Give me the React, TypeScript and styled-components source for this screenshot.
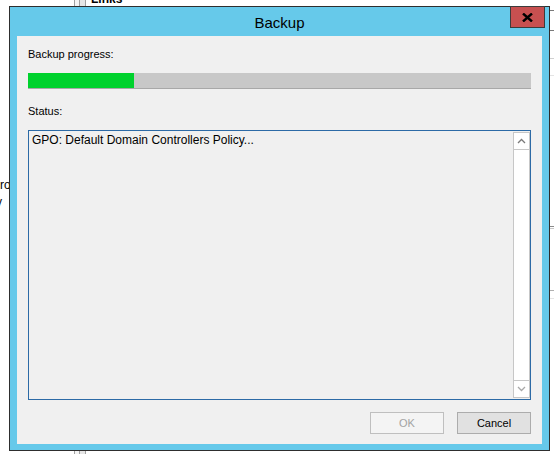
import React from "react";
import styled, { createGlobalStyle } from "styled-components";

const Global = createGlobalStyle`
  html, body { margin: 0; padding: 0; background: #ffffff; }
  body { width: 554px; height: 454px; overflow: hidden; font-family: "Liberation Sans", Arial, sans-serif; }
`;

const Desktop = styled.div`
  position: relative;
  width: 554px;
  height: 454px;
  background: #ffffff;
  overflow: hidden;
`;

const BgText = styled.div<{ $x: number; $y: number; $bold?: boolean }>`
  position: absolute;
  left: ${(p) => p.$x}px;
  top: ${(p) => p.$y}px;
  font-family: "Liberation Sans", Arial, sans-serif;
  font-size: 12px;
  font-weight: ${(p) => (p.$bold ? 700 : 400)};
  color: #000;
  line-height: 14px;
  white-space: nowrap;
`;

const BgSplitter = styled.div<{ $y: number; $h: number }>`
  position: absolute;
  left: 74px;
  top: ${(p) => p.$y}px;
  width: 12px;
  height: ${(p) => p.$h}px;
  box-sizing: border-box;
  border-left: 1px solid #a0a0a0;
  border-right: 1px solid #a0a0a0;
  background: linear-gradient(to right, #f4f4f4 0 4px, #a0a0a0 4px 5px, #e6e6e6 5px 100%);
`;

const BgLine = styled.div<{ $y: number; $c?: string }>`
  position: absolute;
  left: 550px;
  right: 0;
  top: ${(p) => p.$y}px;
  height: 1px;
  background: ${(p) => p.$c || "#7a7a7a"};
`;

const Window = styled.div`
  position: absolute;
  left: 9px;
  top: 6px;
  width: 541px;
  height: 445px;
  box-sizing: border-box;
  border: 1px solid #2e2e2e;
  background: #66c9ea;
  display: flex;
  flex-direction: column;
  padding: 0 7px 6px 7px;
`;

const TitleBar = styled.div`
  height: 29px;
  display: flex;
  align-items: center;
  justify-content: center;
  font-family: "Liberation Sans", Arial, sans-serif;
  font-size: 15px;
  color: #000;
  padding-top: 1px;
  box-sizing: border-box;
`;

const CloseButton = styled.div`
  position: absolute;
  top: -1px;
  right: 4px;
  width: 35px;
  height: 22px;
  box-sizing: border-box;
  border: 1px solid #3c3c3c;
  background: #c75050;
  display: flex;
  align-items: center;
  justify-content: center;
`;

const Client = styled.div`
  flex: 1;
  background: #f0f0f0;
  display: flex;
  flex-direction: column;
  padding: 12px 11px 9px 11px;
  font-family: "Liberation Sans", Arial, sans-serif;
  font-size: 11px;
  color: #000;
`;

const Label = styled.div<{ $gapTop?: number }>`
  line-height: 13px;
  height: 13px;
  margin-top: ${(p) => p.$gapTop || 0}px;
`;

const Progress = styled.div`
  margin-top: 12px;
  height: 16px;
  background: #c8c8c8;
  box-sizing: border-box;
  border-bottom: 1px solid #a8a8a8;
  display: flex;
`;

const ProgressFill = styled.div`
  background: #00d22d;
  height: 100%;
`;

const StatusBox = styled.div`
  margin-top: 12px;
  height: 270px;
  box-sizing: border-box;
  border: 1px solid #2c6aa6;
  background: #f0f0f0;
  display: flex;
`;

const StatusText = styled.div`
  flex: 1;
  padding: 2px 3px;
  font-size: 12px;
  line-height: 14px;
  white-space: nowrap;
`;

const ScrollBar = styled.div`
  width: 17px;
  margin: 1px 0 1px 0;
  box-sizing: border-box;
  border: 1px solid #c7c7c7;
  background: #ffffff;
  display: flex;
  flex-direction: column;
  justify-content: space-between;
`;

const ScrollArrow = styled.div<{ $pos: "top" | "bottom" }>`
  height: 16px;
  display: flex;
  align-items: center;
  justify-content: center;
  ${(p) => (p.$pos === "top" ? "border-bottom: 1px solid #c7c7c7;" : "border-top: 1px solid #c7c7c7;")}
`;

const ButtonRow = styled.div`
  margin-top: 12px;
  display: flex;
  justify-content: flex-end;
  gap: 13px;
`;

const Button = styled.div<{ $disabled?: boolean }>`
  width: 74px;
  height: 22px;
  box-sizing: border-box;
  display: flex;
  align-items: center;
  justify-content: center;
  font-size: 11px;
  border: 1px solid ${(p) => (p.$disabled ? "#bfbfbf" : "#acacac")};
  background: ${(p) => (p.$disabled ? "#f4f4f4" : "#e1e1e1")};
  color: ${(p) => (p.$disabled ? "#a3a3a3" : "#000")};
`;

const Chevron = ({ up }: { up: boolean }) => (
  <svg width="9" height="6" viewBox="0 0 9 6">
    <path
      d={up ? "M1 5 L4.5 1.5 L8 5" : "M1 1 L4.5 4.5 L8 1"}
      fill="none"
      stroke={up ? "#7a7a7a" : "#a8a8a8"}
      strokeWidth="1.3"
    />
  </svg>
);

export default function App() {
  const progress = 106 / 503;
  return (
    <Desktop>
      <Global />
      <BgSplitter $y={0} $h={6} />
      <BgSplitter $y={450} $h={4} />
      <BgText $x={91} $y={-8} $bold>
        Links
      </BgText>
      <BgText $x={-8} $y={178}>
        Pro
      </BgText>
      <BgText $x={-4} $y={195}>
        y
      </BgText>
      <BgLine $y={10} />
      <BgLine $y={30} />
      <BgLine $y={58} $c="#d0d0d0" />
      <BgLine $y={75} $c="#e4e4e4" />
      <BgLine $y={226} $c="#8a8a8a" />
      <BgLine $y={228} $c="#c8c8c8" />
      <BgLine $y={290} $c="#b0b0b0" />
      <BgLine $y={298} $c="#e4e4e4" />
      <Window>
        <TitleBar>Backup</TitleBar>
        <CloseButton>
          <svg width="11" height="9" viewBox="0 0 11 9">
            <path d="M1 0.5 L10 8.5 M10 0.5 L1 8.5" stroke="#000" strokeWidth="2.4" />
          </svg>
        </CloseButton>
        <Client>
          <Label>Backup progress:</Label>
          <Progress>
            <ProgressFill style={{ width: `${progress * 100}%` }} />
          </Progress>
          <Label $gapTop={16}>Status:</Label>
          <StatusBox>
            <StatusText>GPO: Default Domain Controllers Policy...</StatusText>
            <ScrollBar>
              <ScrollArrow $pos="top">
                <Chevron up />
              </ScrollArrow>
              <ScrollArrow $pos="bottom">
                <Chevron up={false} />
              </ScrollArrow>
            </ScrollBar>
          </StatusBox>
          <ButtonRow>
            <Button $disabled>OK</Button>
            <Button>Cancel</Button>
          </ButtonRow>
        </Client>
      </Window>
    </Desktop>
  );
}
